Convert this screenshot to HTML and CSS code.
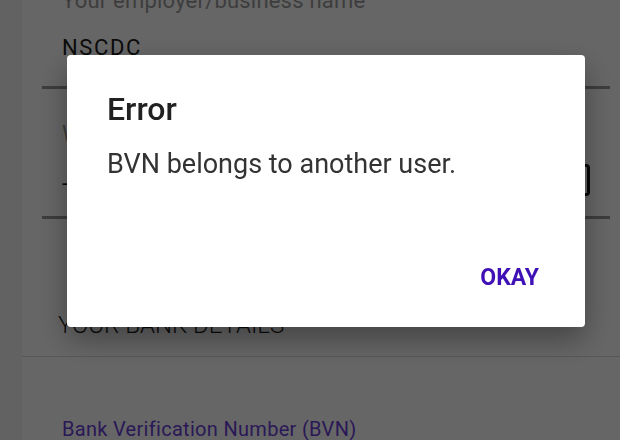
FILE: index.html
```html
<!DOCTYPE html>
<html>
<head>
<meta charset="utf-8">
<link rel="stylesheet" href="styles.css">
</head>
<body>
<div class="page">
  <div class="card">
    <div class="field first">
      <div class="label">Your employer/business name</div>
      <div class="value">NSCDC</div>
    </div>
    <div class="field second">
      <div class="label">When did you start working here?</div>
      <div class="value-row">
        <span class="value">-</span>
        <span class="picker"></span>
      </div>
    </div>
    <div class="section">YOUR BANK DETAILS</div>
    <div class="bank">
      <div class="bank-label">Bank Verification Number (BVN)</div>
    </div>
  </div>
</div>
<div class="scrim">
  <div class="dialog">
    <div class="title">Error</div>
    <div class="message">BVN belongs to another user.</div>
    <div class="actions"><button class="okay">OKAY</button></div>
  </div>
</div>
</body>
</html>
```
FILE: styles.css
```css
html, body {
  margin: 0;
  padding: 0;
  height: 440px;
  overflow: hidden;
}
body {
  background: #f6f6f6;
  font-family: Roboto, "Noto Sans", sans-serif;
}
.page {
  padding-left: 22px;
  height: 440px;
  overflow: hidden;
}
.card {
  background: #ffffff;
  min-height: 520px;
}
.field {
  margin-left: 20px;
  margin-right: 10px;
  border-bottom: 3px solid #999;
  padding-left: 20px;
  box-sizing: border-box;
}
.field.first {
  margin-top: -12px;
  height: 101px;
}
.label {
  font-size: 22px;
  color: #9a9a9a;
  line-height: 26px;
  letter-spacing: 0.2px;
}
.value {
  font-size: 22px;
  letter-spacing: 1.6px;
  color: #1a1a1a;
  line-height: 26px;
}
.first .value {
  margin-top: 21px;
}
.field.second {
  height: 130px;
  padding-top: 32px;
}
.value-row {
  display: flex;
  justify-content: space-between;
  align-items: center;
  margin-top: 24px;
}
.picker {
  width: 12px;
  height: 26px;
  border: 3px solid #111;
  border-left: none;
  border-radius: 0 4px 4px 0;
  margin-top: -9px;
  margin-right: 20px;
}
.section {
  margin-top: 91px;
  padding-left: 36px;
  font-size: 24px;
  font-weight: 300;
  color: #1a1a1a;
  line-height: 30px;
  padding-bottom: 16px;
  border-bottom: 1px solid #ddd;
}
.bank {
  padding-left: 40px;
  padding-top: 60px;
}
.bank-label {
  font-size: 20px;
  letter-spacing: 0.3px;
  line-height: 24px;
  color: #6a40d8;
}
.scrim {
  position: fixed;
  inset: 0;
  background: rgba(0, 0, 0, 0.6);
  padding: 55px 0 0 67px;
}
.dialog {
  width: 518px;
  height: 272px;
  background: #fff;
  border-radius: 4px;
  box-shadow: 0 12px 30px rgba(0, 0, 0, 0.35);
  box-sizing: border-box;
  padding: 36px 40px 0 40px;
  display: flex;
  flex-direction: column;
}
.title {
  font-size: 32px;
  font-weight: 500;
  color: #212121;
  line-height: 36px;
}
.message {
  margin-top: 20px;
  font-size: 27px;
  color: #333;
  line-height: 34px;
}
.actions {
  display: flex;
  justify-content: flex-end;
  margin-top: 84px;
}
.okay {
  background: none;
  border: none;
  padding: 0;
  margin-right: 6px;
  font-family: Roboto, sans-serif;
  font-size: 23px;
  font-weight: 700;
  color: #3f10b5;
  line-height: 26px;
}
```
